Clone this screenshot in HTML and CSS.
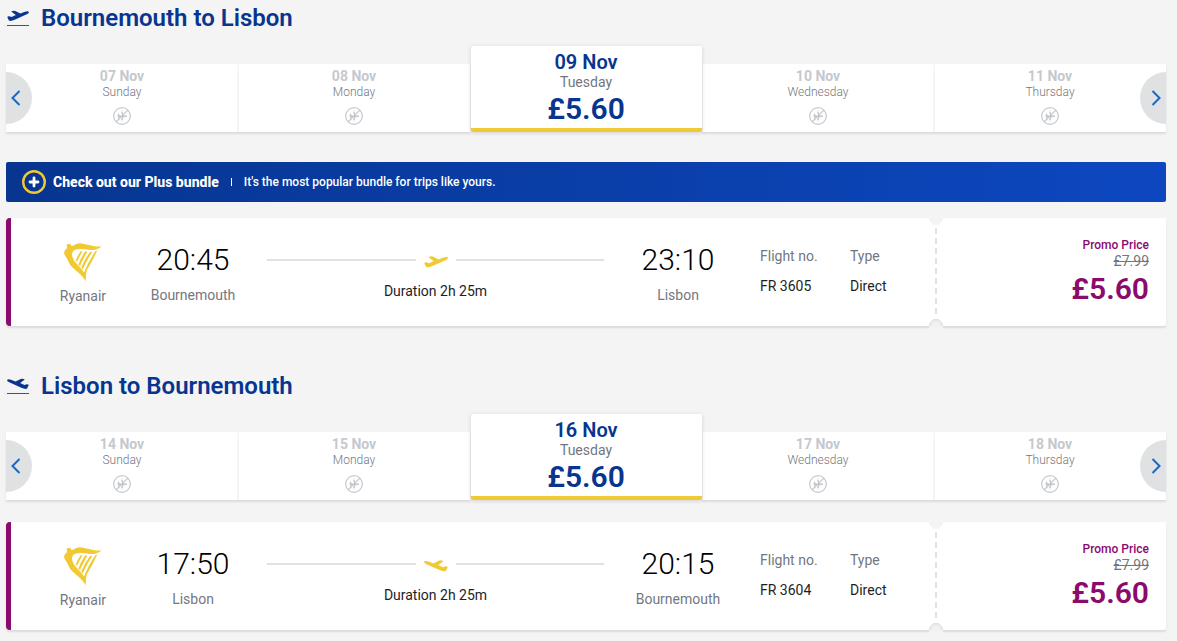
FILE: index.html
```html
<!DOCTYPE html>
<html lang="en">

<head>
  <meta charset="UTF-8" />
  <meta name="viewport" content="width=device-width, initial-scale=1" />
  <title>Select your flights</title>
  <link rel="stylesheet" href="styles.css">
</head>

<body>
  <!-- Shared icons -->
  <svg class="sprite" aria-hidden="true">
    <symbol id="plane" viewBox="0 0 24 12">
      <path d="M0.3 7.2 Q1 6 2.4 6.2 L5 7.2 L9.600 5 L4.6 1.2 Q6.6 0 9 .5 L14.600 3.4 L19.6 1.4 Q23 .2 24 1.8 Q24.100 3 21.600 4.200 L9 9.800 Q5 11.700 2.600 11.300 Q1.800 10.800 .3 7.200Z" />
    </symbol>
    <symbol id="harp" viewBox="0 0 120 120">
      <path d="M11 8 Q17 4 23 7 L26 13 L34 9 Q44 2 60 5 L91 12 Q104 15 117 13 Q108 21 97 23 Q84 26 66 22 Q46 19 33 25 Q25 32 28 44 Q32 58 45 70 Q58 82 65 94 L67 104 L68 118 Q61 104 50 95 Q40 87 31 79 Q19 68 15 56 L11 48 L8 44 L4 36 L3 31 Q5 24 12 19 Z" />
      <path d="M53 28 L58 29 Q49 44 42 59 L38 56 Q44 40 53 28Z M67 28 L73 29 Q60 51 51 72 L46 68 Q54 46 67 28Z M82 29 L88 29 Q71 55 59 82 L55 76 Q64 51 82 29Z M97 28 L103 25 Q87 60 73 82 Q68 94 68 118 L63 92 Q74 62 97 28Z" />
    </symbol>
    <symbol id="no-flight" viewBox="0 0 18 18">
      <g fill="none" stroke="currentColor">
        <circle cx="9" cy="9" r="8.300" stroke-width="1.200" />
        <path d="M3 15 L15 3" stroke-width="1.200" />
        <path d="M4.500 9.200 H14 M5 7 L6.500 9 L5.500 11.500 M8.500 4.500 L10.500 9 L8.500 13.500" stroke-width="1.500" />
      </g>
    </symbol>
    <symbol id="chevron-left" viewBox="0 0 10 16">
      <path d="M8.500 1 L1.500 8 L8.500 15" fill="none" stroke="currentColor" stroke-width="2" />
    </symbol>
    <symbol id="chevron-right" viewBox="0 0 10 16">
      <path d="M1.500 1 L8.500 8 L1.500 15" fill="none" stroke="currentColor" stroke-width="2" />
    </symbol>
  </svg>

  <main class="trips">
    <section class="journey">
      <h2 class="journey-title">
        <span class="title-icon"><svg class="plane"><use href="#plane" /></svg></span>
        Bournemouth to Lisbon
      </h2>

      <div class="carousel">
        <button type="button" class="day">
          <span class="date">07 Nov</span>
          <span class="weekday">Sunday</span>
          <svg class="no-flight"><use href="#no-flight" /></svg>
        </button>
        <button type="button" class="day">
          <span class="date">08 Nov</span>
          <span class="weekday">Monday</span>
          <svg class="no-flight"><use href="#no-flight" /></svg>
        </button>
        <button type="button" class="day selected">
          <span class="date">09 Nov</span>
          <span class="weekday">Tuesday</span>
          <span class="fare">£5.60</span>
        </button>
        <button type="button" class="day">
          <span class="date">10 Nov</span>
          <span class="weekday">Wednesday</span>
          <svg class="no-flight"><use href="#no-flight" /></svg>
        </button>
        <button type="button" class="day">
          <span class="date">11 Nov</span>
          <span class="weekday">Thursday</span>
          <svg class="no-flight"><use href="#no-flight" /></svg>
        </button>
        <button type="button" class="arrow prev" aria-label="Previous dates"><svg><use href="#chevron-left" /></svg></button>
        <button type="button" class="arrow next" aria-label="Next dates"><svg><use href="#chevron-right" /></svg></button>
      </div>

      <div class="banner">
        <svg class="plus" viewBox="0 0 24 24">
          <circle cx="12" cy="12" r="10.800" fill="none" stroke="#f1c933" stroke-width="2.400" />
          <path d="M12 8 V16 M8 12 H16" stroke="#fff" stroke-width="2.800" stroke-linecap="round" />
        </svg>
        <strong>Check out our Plus bundle</strong>
        <span class="divider"></span>
        <span class="banner-text">It's the most popular bundle for trips like yours.</span>
      </div>

      <article class="flight">
        <div class="carrier">
          <svg class="harp"><use href="#harp" /></svg>
          <span class="label">Ryanair</span>
        </div>
        <div class="stop">
          <span class="time">20:45</span>
          <span class="label">Bournemouth</span>
        </div>
        <div class="route">
          <div class="route-line"><svg class="plane"><use href="#plane" /></svg></div>
          <span class="value">Duration 2h 25m</span>
        </div>
        <div class="stop">
          <span class="time">23:10</span>
          <span class="label">Lisbon</span>
        </div>
        <dl class="details">
          <div>
            <dt>Flight no.</dt>
            <dd>FR 3605</dd>
          </div>
          <div>
            <dt>Type</dt>
            <dd>Direct</dd>
          </div>
        </dl>
        <div class="price">
          <span class="promo">Promo Price</span>
          <del>£7.99</del>
          <span class="amount">£5.60</span>
        </div>
      </article>
    </section>

    <section class="journey return">
      <h2 class="journey-title">
        <span class="title-icon"><svg class="plane"><use href="#plane" /></svg></span>
        Lisbon to Bournemouth
      </h2>

      <div class="carousel">
        <button type="button" class="day">
          <span class="date">14 Nov</span>
          <span class="weekday">Sunday</span>
          <svg class="no-flight"><use href="#no-flight" /></svg>
        </button>
        <button type="button" class="day">
          <span class="date">15 Nov</span>
          <span class="weekday">Monday</span>
          <svg class="no-flight"><use href="#no-flight" /></svg>
        </button>
        <button type="button" class="day selected">
          <span class="date">16 Nov</span>
          <span class="weekday">Tuesday</span>
          <span class="fare">£5.60</span>
        </button>
        <button type="button" class="day">
          <span class="date">17 Nov</span>
          <span class="weekday">Wednesday</span>
          <svg class="no-flight"><use href="#no-flight" /></svg>
        </button>
        <button type="button" class="day">
          <span class="date">18 Nov</span>
          <span class="weekday">Thursday</span>
          <svg class="no-flight"><use href="#no-flight" /></svg>
        </button>
        <button type="button" class="arrow prev" aria-label="Previous dates"><svg><use href="#chevron-left" /></svg></button>
        <button type="button" class="arrow next" aria-label="Next dates"><svg><use href="#chevron-right" /></svg></button>
      </div>

      <article class="flight">
        <div class="carrier">
          <svg class="harp"><use href="#harp" /></svg>
          <span class="label">Ryanair</span>
        </div>
        <div class="stop">
          <span class="time">17:50</span>
          <span class="label">Lisbon</span>
        </div>
        <div class="route">
          <div class="route-line"><svg class="plane"><use href="#plane" /></svg></div>
          <span class="value">Duration 2h 25m</span>
        </div>
        <div class="stop">
          <span class="time">20:15</span>
          <span class="label">Bournemouth</span>
        </div>
        <dl class="details">
          <div>
            <dt>Flight no.</dt>
            <dd>FR 3604</dd>
          </div>
          <div>
            <dt>Type</dt>
            <dd>Direct</dd>
          </div>
        </dl>
        <div class="price">
          <span class="promo">Promo Price</span>
          <del>£7.99</del>
          <span class="amount">£5.60</span>
        </div>
      </article>
    </section>
  </main>
</body>

</html>
```

FILE: styles.css
```css
* {
  margin: 0;
  padding: 0;
  box-sizing: border-box;
}

body {
  font-family: Roboto, 'Liberation Sans', sans-serif;
  font-size: 14px;
  line-height: 20px;
  background: #f4f4f4;
  color: #1e1e1e;
}

button {
  font-family: inherit;
  border: none;
  cursor: pointer;
}

svg {
  display: block;
}

.sprite {
  display: none;
}

.trips {
  display: flex;
  flex-direction: column;
  gap: 42px;
  padding: 0 11px 10px 6px;
}

.journey-title {
  display: flex;
  align-items: center;
  gap: 12px;
  height: 36px;
  color: #073590;
  font-size: 24px;
  font-weight: 600;
  line-height: 36px;
}

.title-icon {
  width: 22px;
  margin-left: 1px;
  padding-bottom: 3px;
  border-bottom: 1px solid #2157b8;
}

.plane {
  width: 24px;
  height: 12px;
  fill: currentColor;
}

.title-icon .plane {
  width: 22px;
}

.return .plane {
  transform: scaleX(-1);
}

/* Date carousel */
.carousel {
  position: relative;
  display: grid;
  grid-template-columns: repeat(5, 1fr);
  align-items: end;
  margin: 10px 0 22px;
}

.day {
  display: flex;
  flex-direction: column;
  align-items: center;
  padding: 4px 1px 7px 0;
  background: #fff;
  border-left: 1px solid #f3f3f3;
  box-shadow: 0 2px 2px rgba(0, 0, 0, 0.1);
  color: #c5c9ce;
}

.day:first-child {
  border-left-color: #fff;
}

.date {
  font-size: 14px;
  font-weight: 700;
  line-height: 16px;
}

.weekday {
  margin-bottom: 7px;
  color: #737780;
  font-size: 12px;
  font-weight: 300;
  line-height: 16px;
}

.no-flight {
  width: 18px;
  height: 18px;
}

.day.selected {
  z-index: 1;
  margin-left: 1px;
  padding-bottom: 0;
  border-left: none;
  border-bottom: 4px solid #f1c933;
  border-radius: 2px;
  box-shadow: 0 1px 4px rgba(0, 0, 0, 0.15);
  color: #073590;
}

.selected .date {
  font-size: 20px;
  font-weight: 600;
  line-height: 24px;
}

.selected .weekday {
  margin-bottom: 0;
  font-size: 14px;
  font-weight: 400;
  line-height: 16px;
}

.fare {
  font-size: 30px;
  font-weight: 600;
  line-height: 38px;
}

.arrow {
  position: absolute;
  bottom: 8px;
  z-index: 2;
  display: flex;
  align-items: center;
  width: 26px;
  height: 52px;
  padding: 0 5px;
  background: #dfe1e3;
  color: #1669c9;
}

.arrow svg {
  width: 10px;
  height: 16px;
}

.prev {
  left: 0;
  border-radius: 0 26px 26px 0;
}

.next {
  right: 0;
  justify-content: flex-end;
  border-radius: 26px 0 0 26px;
}

/* Plus bundle banner */
.banner {
  display: flex;
  align-items: center;
  height: 40px;
  margin: 30px 0 16px;
  padding: 0 16px;
  background: linear-gradient(90deg, #073590, #0d47c0);
  border-radius: 2px;
  color: #fff;
}

.plus {
  width: 24px;
  height: 24px;
  margin-right: 7px;
}

.banner strong {
  font-weight: 800;
}

.divider {
  width: 1px;
  height: 8px;
  margin: 0 12px;
  background: #fff;
}

.banner-text {
  font-size: 12px;
  font-weight: 500;
}

/* Flight card */
.flight {
  display: flex;
  background: #fff;
  border-left: 5px solid #8b0a6e;
  border-radius: 4px 2px 2px 4px;
  box-shadow: 0 2px 2px rgba(0, 0, 0, 0.1);
}

.carrier,
.stop,
.route {
  display: flex;
  flex-direction: column;
  align-items: center;
  padding: 24px 0 20px;
}

.carrier {
  width: 80px;
  margin: 0 15px 0 32px;
}

.harp {
  width: 40px;
  height: 40px;
  margin-bottom: 4px;
  fill: #f1c933;
}

.label,
dt {
  color: #737780;
}

.stop {
  width: 110px;
}

.time {
  margin-bottom: 7px;
  color: #000;
  font-size: 30px;
  font-weight: 350;
  line-height: 36px;
}

.route {
  flex: 1;
  margin: 0 19px;
}

.route-line {
  display: flex;
  align-items: center;
  gap: 8px;
  width: 100%;
  height: 36px;
  margin-bottom: 3px;
  color: #f1c933;
}

.route-line .plane {
  height: 16px;
  padding-top: 4px;
}

.route-line::before,
.route-line::after {
  content: "";
  flex: 1;
  height: 2px;
  background: #e1e1e1;
}

.details {
  display: flex;
  margin-left: 27px;
  padding-top: 28px;
}

.details div {
  width: 90px;
}

.details div:last-child {
  width: 86px;
}

dt {
  margin-bottom: 10px;
}

.price {
  position: relative;
  display: flex;
  flex-direction: column;
  align-items: flex-end;
  width: 230px;
  padding: 19px 17px 0 0;
  color: #8b0a6e;
}

/* perforated edge */
.price::before {
  content: "";
  position: absolute;
  top: 10px;
  bottom: 10px;
  left: -1px;
  width: 2px;
  background: repeating-linear-gradient(#e1e1e1 0 6px, transparent 6px 10px);
}

.price::after {
  content: "";
  position: absolute;
  top: 0;
  bottom: -3px;
  left: -7px;
  width: 14px;
  background:
    radial-gradient(circle at 7px 0, #f4f4f4 7px, transparent 7px) top / 14px 7px no-repeat,
    radial-gradient(circle at 7px 7px, #f0f0f0 4px, #e0e0e0 7px, transparent 7px) 0 101px / 14px 7px no-repeat,
    linear-gradient(#f0f0f0, #f4f4f4) bottom / 14px 3px no-repeat;
}

.promo {
  font-size: 12px;
  font-weight: 500;
  line-height: 16px;
}

del {
  margin-bottom: 1px;
  color: #737780;
  line-height: 17px;
}

.amount {
  font-size: 30px;
  font-weight: 600;
  line-height: 36px;
}
```
